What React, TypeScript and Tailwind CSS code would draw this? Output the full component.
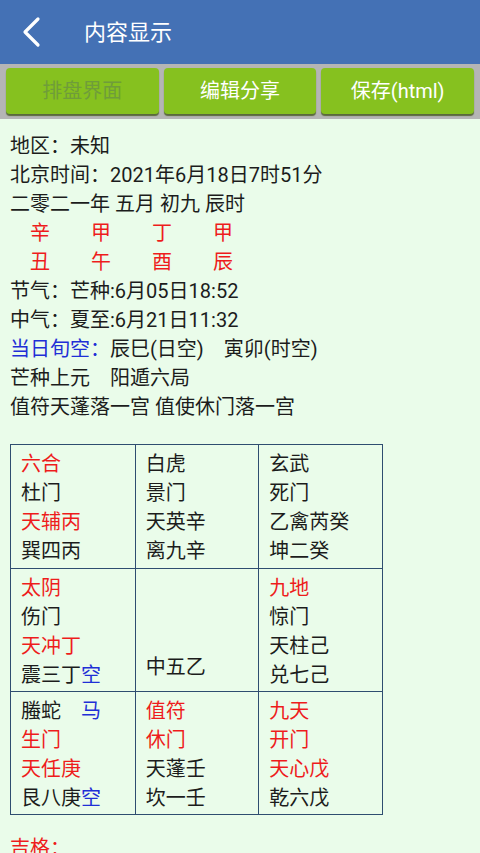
import React from 'react';

const RED = 'text-[#ee1c1c]';
const BLUE = 'text-[#1f2fd6]';

type Seg = { t: string; c?: string };
type Cell = { lines: Seg[][]; pad?: string };

const cells: Cell[] = [
  { lines: [[{ t: '六合', c: RED }], [{ t: '杜门' }], [{ t: '天辅丙', c: RED }], [{ t: '巽四丙' }]] },
  { lines: [[{ t: '白虎' }], [{ t: '景门' }], [{ t: '天英辛' }], [{ t: '离九辛' }]] },
  { lines: [[{ t: '玄武' }], [{ t: '死门' }], [{ t: '乙禽芮癸' }], [{ t: '坤二癸' }]] },
  { lines: [[{ t: '太阴', c: RED }], [{ t: '伤门' }], [{ t: '天冲丁', c: RED }], [{ t: '震三丁' }, { t: '空', c: BLUE }]] },
  { lines: [[{ t: '中五乙' }]], pad: 'pt-[84px]' },
  { lines: [[{ t: '九地', c: RED }], [{ t: '惊门' }], [{ t: '天柱己' }], [{ t: '兑七己' }]] },
  { lines: [[{ t: '螣蛇　' }, { t: '马', c: BLUE }], [{ t: '生门', c: RED }], [{ t: '天任庚', c: RED }], [{ t: '艮八庚' }, { t: '空', c: BLUE }]] },
  { lines: [[{ t: '值符', c: RED }], [{ t: '休门', c: RED }], [{ t: '天蓬壬' }], [{ t: '坎一壬' }]] },
  { lines: [[{ t: '九天', c: RED }], [{ t: '开门', c: RED }], [{ t: '天心戊', c: RED }], [{ t: '乾六戊' }]] },
];

const stems = ['辛', '甲', '丁', '甲'];
const branches = ['丑', '午', '酉', '辰'];

const Pillars = ({ items }: { items: string[] }) => (
  <div className={`pl-5 flex ${RED}`}>
    {items.map((s, i) => (
      <span key={i} className="w-[61px]">{s}</span>
    ))}
  </div>
);

const ActionButton = ({ label, disabled }: { label: string; disabled?: boolean }) => (
  <button
    className={`flex-1 h-[46px] rounded-[4px] bg-[#86c11f] shadow-[0_2px_1px_rgba(60,80,20,0.75)] text-[20px] ${disabled ? 'text-[#6f9d3a]' : 'text-white'}`}
  >
    {label}
  </button>
);

export default function App() {
  return (
    <div className="w-[480px] h-[853px] overflow-hidden bg-[#eafcea] text-[#1c1c1c] font-['Roboto','Noto_Sans_CJK_SC',sans-serif]">
      {/* Title bar */}
      <div className="h-16 bg-[#4471b5] flex items-center text-white">
        <svg className="ml-[20px] w-6 h-8" viewBox="0 0 24 32" fill="none" stroke="white" strokeWidth="3.2" strokeLinecap="round" strokeLinejoin="round">
          <path d="M18 3 L5 16 L18 29" />
        </svg>
        <span className="ml-[40px] text-[22px]">内容显示</span>
      </div>

      {/* Actions */}
      <div className="bg-[#b5b5b5] flex gap-[5px] px-[6px] pt-[4px] pb-[5px]">
        <ActionButton label="排盘界面" disabled />
        <ActionButton label="编辑分享" />
        <ActionButton label="保存(html)" />
      </div>

      {/* Chart info */}
      <div className="px-[10px] pt-[13px] text-[20px] leading-[29px]">
        <div>地区：未知</div>
        <div>北京时间：2021年6月18日7时51分</div>
        <div>二零二一年 五月 初九 辰时</div>
        <Pillars items={stems} />
        <Pillars items={branches} />
        <div>节气：芒种:6月05日18:52</div>
        <div>中气：夏至:6月21日11:32</div>
        <div>
          <span className={BLUE}>当日旬空：</span>辰巳(日空)　寅卯(时空)
        </div>
        <div>芒种上元　阳遁六局</div>
        <div>值符天蓬落一宫 值使休门落一宫</div>

        {/* Nine palaces */}
        <div className="mt-[22px] w-[373px] grid grid-cols-3 border border-[#2f4d70]">
          {cells.map((cell, i) => (
            <div
              key={i}
              className={`h-[123px] pl-[10px] ${cell.pad ?? 'pt-[5px]'} ${i % 3 !== 0 ? 'border-l border-[#2f4d70]' : ''} ${i >= 3 ? 'border-t border-[#2f4d70]' : ''}`}
            >
              {cell.lines.map((line, j) => (
                <div key={j}>
                  {line.map((seg, k) => (
                    <span key={k} className={seg.c}>{seg.t}</span>
                  ))}
                </div>
              ))}
            </div>
          ))}
        </div>

        <div className={`mt-[19px] ${RED}`}>吉格：</div>
      </div>
    </div>
  );
}
